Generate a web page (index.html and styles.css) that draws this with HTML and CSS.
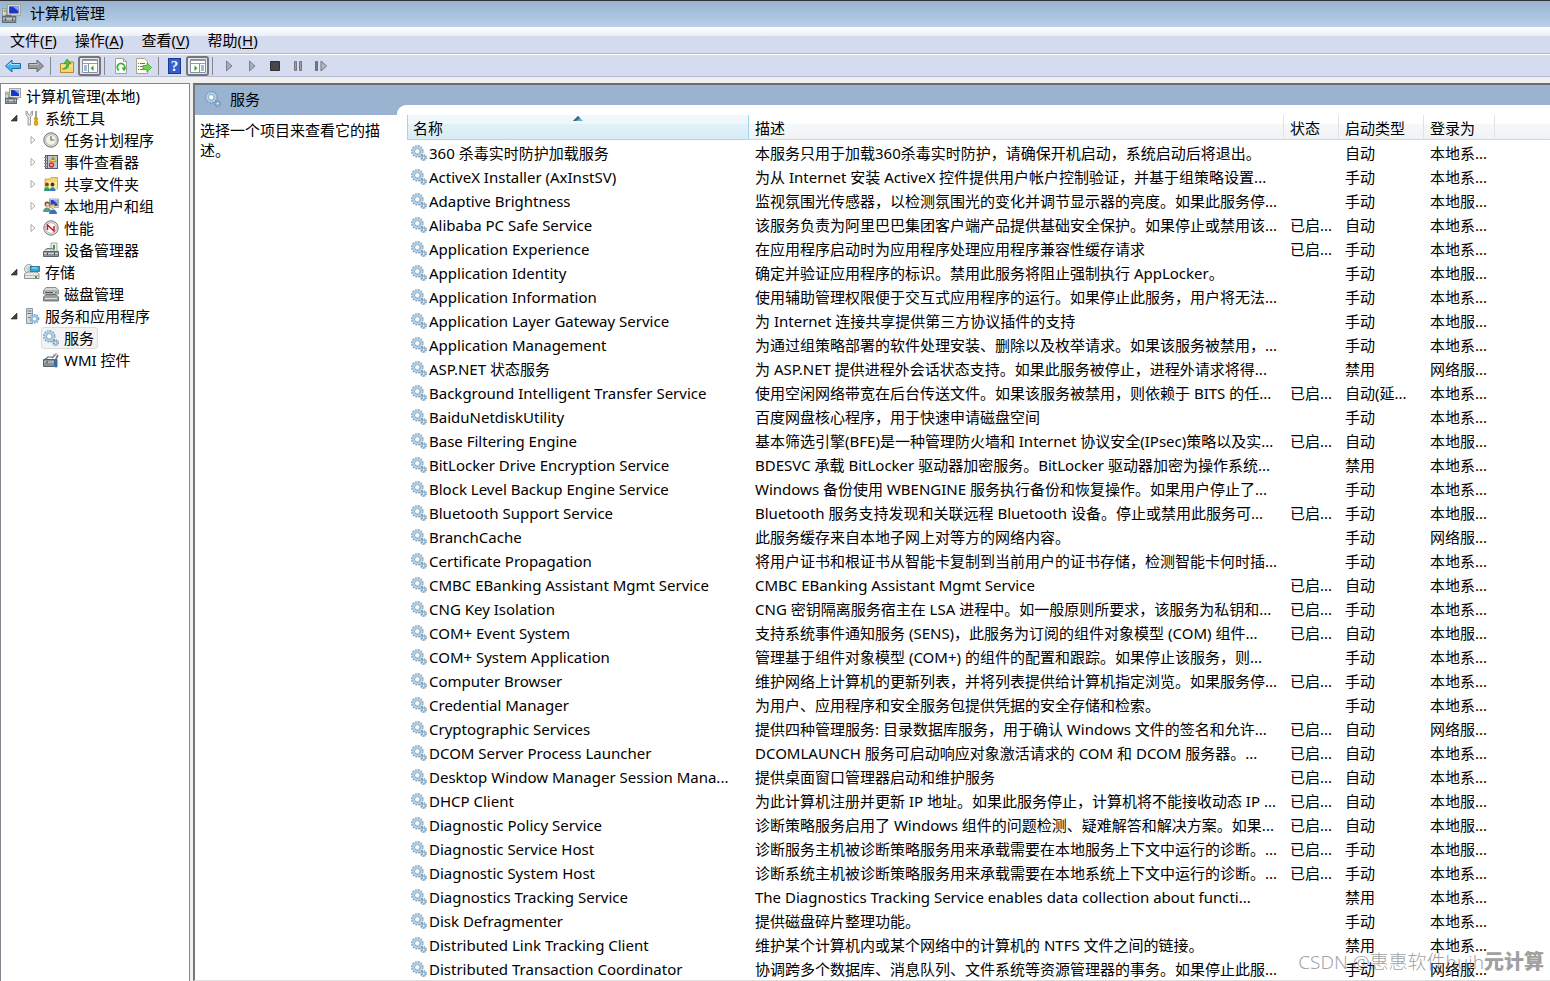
FILE: index.html
```html
<!DOCTYPE html>
<html lang="zh-CN">
<head>
  <meta charset="UTF-8" />
  <title>计算机管理</title>
  <link rel="stylesheet" href="styles.css">
</head>
<body>

  <!-- shared icons -->
  <svg class="sprite" aria-hidden="true">
    <symbol id="i-gears" viewBox="0 0 16 16">
      <circle cx="6.3" cy="6.3" r="5.2" fill="none" stroke="#7391ad" stroke-width="2" stroke-dasharray="1.7 1" />
      <circle cx="6.3" cy="6.3" r="4" fill="none" stroke="#a9cfe9" stroke-width="2.6" />
      <circle cx="6.3" cy="6.3" r="2.7" fill="#fff" stroke="#6d8ba6" stroke-width=".7" />
      <circle cx="12.6" cy="12.6" r="2.6" fill="none" stroke="#6f8ca5" stroke-width="1.6" stroke-dasharray="1.2 .8" />
      <circle cx="12.6" cy="12.6" r="1.5" fill="#fff" stroke="#8fb0ca" stroke-width="1.3" />
    </symbol>
    <symbol id="i-computer" viewBox="0 0 16 16">
      <rect x="4.5" y=".5" width="11" height="9" fill="#e4e4dc" stroke="#a5a59c" />
      <rect x="6" y="2" width="8" height="6" fill="#1d35c4" />
      <path d="M9 2h5v4z" fill="#86a9f2" />
      <path d="M9 10h4l1 2H8z" fill="#b9b9b0" />
      <rect x=".5" y="4" width="3" height="6" fill="#d9dbd6" stroke="#8b8e8a" stroke-width=".7" />
      <path d="M1.5 6h1.5" stroke="#3a9b35" />
      <path d="M3.5 10.5V9.5h4v1" fill="none" stroke="#6b7378" />
      <rect x=".5" y="10.5" width="11" height="5" fill="#8d989e" stroke="#626b70" />
      <path d="M1 12.5h10" stroke="#d5dcdf" /><path d="M3 12v2M9 12v2" stroke="#454c50" />
    </symbol>
    <symbol id="i-tools" viewBox="0 0 16 16">
      <path d="M2 1v4l2 2v8h2.500V7l2-2V1L7 2v2L5.300 5 3.700 4V2z" fill="#e7e7e7" stroke="#888" stroke-width=".8" />
      <path d="M12 1v7" stroke="#8a8a8a" stroke-width="1.600" />
      <path d="M10.300 8h3.400l-.7 2 .8 4.500-1.800 1-1.800-1L11 10z" fill="#f4b000" stroke="#b87900" stroke-width=".7" />
    </symbol>
    <symbol id="i-clock" viewBox="0 0 16 16">
      <circle cx="8" cy="8" r="7.2" fill="#dedede" stroke="#6f6f6f" />
      <circle cx="8" cy="8" r="5.400" fill="#f7f3df" stroke="#a7a7a7" stroke-width=".7" />
      <path d="M8 4v4h3.500" fill="none" stroke="#3c70a8" stroke-width="1.200" />
    </symbol>
    <symbol id="i-event" viewBox="0 0 16 16">
      <rect x="2.500" y="1.500" width="12" height="13" fill="#b8c6da" stroke="#4e5c78" />
      <path d="M4.500 2v12" stroke="#53617b" /><path d="M1 3.500h3M1 6.500h3M1 9.500h3M1 12.500h3" stroke="#888" />
      <path d="M10 2.500l3.500 5h-7z" fill="#ffd42e" stroke="#b28700" stroke-width=".7" />
      <path d="M10 4v2" stroke="#333" />
      <circle cx="8.500" cy="11" r="2.700" fill="#d92e28" /><path d="M7.500 10l2 2m0-2l-2 2" stroke="#fff" stroke-width=".8" />
    </symbol>
    <symbol id="i-share" viewBox="0 0 16 16">
      <path d="M2 3h5l1-1.500h6.500V13H2z" fill="#f6d66d" stroke="#c79a2c" stroke-width=".8" />
      <path d="M3 5.500h11V13H3z" fill="#ffe896" />
      <circle cx="4" cy="8.500" r="1.900" fill="#7b4a26" /><path d="M1 15c0-5 6-5 6 0z" fill="#2f9b6a" />
      <circle cx="9.500" cy="8.500" r="1.900" fill="#3a3a3a" /><path d="M6.700 15c0-5 5.800-5 5.800 0z" fill="#3579c0" />
    </symbol>
    <symbol id="i-users" viewBox="0 0 16 16">
      <rect x="6.500" y="1" width="9" height="8.500" fill="#e4e4dc" stroke="#9c9c94" stroke-width=".8" />
      <rect x="7.500" y="2" width="7" height="6" fill="#2543cc" /><path d="M10 2h4.500v4z" fill="#8fb0f4" />
      <circle cx="4.200" cy="6" r="2.600" fill="#6f4a2c" /><circle cx="4.500" cy="6.800" r="1.700" fill="#efc39a" />
      <path d="M0 14c0-6 8-6 8 0z" fill="#5b9a86" />
      <circle cx="9.800" cy="8.500" r="2.400" fill="#c9a04a" /><circle cx="9.800" cy="9" r="1.700" fill="#f3cda4" />
      <path d="M6 16c0-6 8-6 8 0z" fill="#3673bd" />
    </symbol>
    <symbol id="i-perf" viewBox="0 0 16 16">
      <circle cx="8" cy="8" r="7.200" fill="#e5e5e5" stroke="#767676" />
      <circle cx="8" cy="8" r="5.300" fill="#fff" stroke="#999" stroke-width=".7" />
      <path d="M4.500 10V5l6.500 6V6" fill="none" stroke="#cf1f1f" stroke-width="1.500" />
    </symbol>
    <symbol id="i-device" viewBox="0 0 16 16">
      <path d="M8 1h6v9H8z" fill="#edf0f0" stroke="#8a9292" stroke-width=".8" /><path d="M11 3v4" stroke="#36a536" stroke-width="2" />
      <path d="M1.500 8.500L4 6.500h5l3 2" fill="#c3cacd" stroke="#747c80" />
      <path d="M.5 9.500h15v5H.5z" fill="#8c979d" stroke="#5e676c" />
      <path d="M1 11.500h14" stroke="#d0d8dc" /><path d="M4.500 10.500v2.500M11.500 10.500v2.500" stroke="#444c50" />
    </symbol>
    <symbol id="i-storage" viewBox="0 0 16 16">
      <circle cx="5" cy="5" r="4.500" fill="#dbe4e0" stroke="#8a9790" stroke-width=".8" /><circle cx="5" cy="5" r="1.300" fill="#fff" stroke="#819087" stroke-width=".6" />
      <rect x="6.500" y="2.500" width="9" height="5" fill="#35a7dc" stroke="#1a6d9c" stroke-width=".8" /><path d="M8 4h5" stroke="#b7e8fb" />
      <path d="M2 9l1-1h10l2 2v4.500H.5V10z" fill="#e9e9e4" stroke="#777" stroke-width=".8" />
      <path d="M1 11.500h14" stroke="#aaa" stroke-width=".7" /><rect x="11" y="12" width="2" height="2" fill="#2ba82b" />
    </symbol>
    <symbol id="i-disk" viewBox="0 0 16 16">
      <path d="M3 1.500h10l2.500 3V8H.5V4.500z" fill="#d5d7d7" stroke="#777" stroke-width=".8" />
      <path d="M.5 5h15" stroke="#888" /><path d="M2 6.500h8" stroke="#555" /><path d="M12 6.500h2" stroke="#2ba82b" />
      <path d="M3 8.500h10l2.500 2.500v4H.5v-4z" fill="#9b9e9e" stroke="#5f6262" stroke-width=".8" />
      <path d="M2 12.500h12" stroke="#e1e3e3" />
    </symbol>
    <symbol id="i-apps" viewBox="0 0 16 16">
      <path d="M2.500.5h6v15h-6z" fill="#d4d9dc" stroke="#858d91" stroke-width=".9" />
      <path d="M3.500 3h4M3.500 5.500h4" stroke="#6c757a" /><path d="M4 9.500h2" stroke="#3ca93c" />
      <circle cx="10.500" cy="10.800" r="4.100" fill="none" stroke="#6f9cc0" stroke-width="1.500" stroke-dasharray="1.600 1" />
      <circle cx="10.500" cy="10.800" r="2.600" fill="#fff" stroke="#94bedd" stroke-width="1.900" />
    </symbol>
    <symbol id="i-wmi" viewBox="0 0 16 16">
      <path d="M2 7.500l3-2.500h4" fill="none" stroke="#596267" stroke-width="1.200" />
      <path d="M.5 7.500h11v7H.5z" fill="#87939a" stroke="#566066" /><path d="M1 10h10" stroke="#c9d2d6" /><path d="M4 9v2.500" stroke="#3c4448" />
      <path d="M13 8v6" stroke="#2f6fb3" stroke-width="3" stroke-linecap="round" />
      <path d="M9 6l4-4M13 7l2-4" stroke="#777" stroke-width="1.700" /><path d="M10 3l4-1.500" stroke="#bbb" stroke-width="1.500" />
    </symbol>
    <symbol id="i-open" viewBox="0 0 8 8"><path d="M7 1v6H1z" fill="#404040" stroke="#262626" stroke-width=".6" /></symbol>
    <symbol id="i-closed" viewBox="0 0 8 8"><path d="M2 .5v7L6 4z" fill="#fff" stroke="#a0a0a0" stroke-width=".9" /></symbol>
    <symbol id="i-play" viewBox="0 0 16 16"><path d="M5.500 3v10L11 8z" fill="#a9adb6" stroke="#7d8189" /></symbol>
  </svg>

  <header class="titlebar">
    <svg class="app-icon"><use href="#i-computer" /></svg>
    <h1>计算机管理</h1>
  </header>

  <nav class="menubar">
    <button>文件(<u>F</u>)</button>
    <button>操作(<u>A</u>)</button>
    <button>查看(<u>V</u>)</button>
    <button>帮助(<u>H</u>)</button>
  </nav>

  <div class="toolbar">
    <button aria-label="后退"><svg viewBox="0 0 16 16"><path d="M.5 8l6.500-6v3.500h8.500v5H7V14z" fill="#43b4ee" stroke="#1a6aa5" /><path d="M2.500 7.500L6 4.500v2h8.500" fill="none" stroke="#a9e2fc" /></svg></button>
    <button aria-label="前进"><svg viewBox="0 0 16 16"><path d="M15.500 8L9 2v3.500H.5v5H9V14z" fill="#96989c" stroke="#68696c" /><path d="M1.500 6.500H10v-2" fill="none" stroke="#c5c6c9" /></svg></button>
    <span class="sep"></span>
    <button aria-label="上一级"><svg viewBox="0 0 16 16"><path d="M1.500 5.500H6L7.500 4h7v10.500h-13z" fill="#f4d474" stroke="#b78a2b" /><path d="M2 8h12" stroke="#fff0b4" /><path d="M3.500 11c3.500-1 4-3 4-5.500H5L8 1l4 4.500h-2c0 4-2 6-6.500 5.500z" fill="#4fc13c" stroke="#2b8a20" stroke-width=".6" /></svg></button>
    <button class="pressed" aria-label="显示/隐藏控制台树"><svg viewBox="0 0 16 16"><path d="M.5 1.500h15v13H.5z" fill="#fff" stroke="#8a8f99" /><path d="M1 2.500h14M1 5.500h14" stroke="#959ba6" /><path d="M6.500 6v8.500" stroke="#8a8f99" /><path d="M2 8h3M2 10h3M2 12h3" stroke="#3978b8" /><path d="M11.500 7.500v5.500l-3-2.800z" fill="#2fa52c" /></svg></button>
    <span class="sep"></span>
    <button aria-label="刷新"><svg viewBox="0 0 16 16"><path d="M2.500.5h8l3 3v12h-11z" fill="#fff" stroke="#a0a0a0" /><path d="M10.500.5v3h3" fill="none" stroke="#a0a0a0" /><path d="M6 12.300A3.700 3.700 0 1 1 11.200 11" fill="none" stroke="#36b336" stroke-width="1.800" /><path d="M8.500 9.500h5L11 13.500z" fill="#36b336" /></svg></button>
    <button aria-label="导出列表"><svg viewBox="0 0 16 16"><path d="M.5.500h8l3 3v12H.5z" fill="#fffbe9" stroke="#aaa38e" /><path d="M2 5.500h1M4 5.500h5M2 8.500h1M4 8.500h4M2 11.500h1M4 11.500h4" stroke="#6e6e8a" /><path d="M7 7.500h4V5l4.500 4.500L11 14v-2.500H7z" fill="#6fd156" stroke="#329b28" stroke-width=".7" /></svg></button>
    <span class="sep"></span>
    <button aria-label="帮助"><span class="help">?</span></button>
    <button class="pressed" aria-label="显示/隐藏操作窗格"><svg viewBox="0 0 16 16"><path d="M.5 1.500h15v13H.5z" fill="#fff" stroke="#8a8f99" /><path d="M1 2.500h14M1 5.500h14" stroke="#959ba6" /><path d="M9.500 6v8.500" stroke="#8a8f99" /><path d="M11 8h3M11 10h3M11 12h3" stroke="#3978b8" /><path d="M4.500 7.500v5.500l3-2.800z" fill="#2fa52c" /></svg></button>
    <span class="sep"></span>
    <button aria-label="启动服务"><svg><use href="#i-play" /></svg></button>
    <button aria-label="继续"><svg><use href="#i-play" /></svg></button>
    <button aria-label="停止服务"><svg viewBox="0 0 16 16"><path d="M3.500 3.500h9v9h-9z" fill="#474747" stroke="#2f2f2f" /></svg></button>
    <button aria-label="暂停服务"><svg viewBox="0 0 16 16"><path d="M4.500 3.500h2v9h-2zM9.500 3.500h2v9h-2z" fill="#9a9ea7" stroke="#74777e" /></svg></button>
    <button aria-label="重启动服务"><svg viewBox="0 0 16 16"><path d="M2.500 3.500h2v9h-2z" fill="#777b84" stroke="#6b6e75" /><path d="M8 3v10l5.500-5z" fill="#b3b6be" stroke="#6f737b" /></svg></button>
  </div>

  <main class="workspace">
    <nav class="tree">
      <a href="#"><svg class="icon"><use href="#i-computer" /></svg><span>计算机管理(本地)</span></a>
      <ul>
        <li>
          <a href="#"><svg class="arrow"><use href="#i-open" /></svg><svg class="icon"><use href="#i-tools" /></svg><span>系统工具</span></a>
          <ul>
            <li><a href="#"><svg class="arrow"><use href="#i-closed" /></svg><svg class="icon"><use href="#i-clock" /></svg><span>任务计划程序</span></a></li>
            <li><a href="#"><svg class="arrow"><use href="#i-closed" /></svg><svg class="icon"><use href="#i-event" /></svg><span>事件查看器</span></a></li>
            <li><a href="#"><svg class="arrow"><use href="#i-closed" /></svg><svg class="icon"><use href="#i-share" /></svg><span>共享文件夹</span></a></li>
            <li><a href="#"><svg class="arrow"><use href="#i-closed" /></svg><svg class="icon"><use href="#i-users" /></svg><span>本地用户和组</span></a></li>
            <li><a href="#"><svg class="arrow"><use href="#i-closed" /></svg><svg class="icon"><use href="#i-perf" /></svg><span>性能</span></a></li>
            <li><a href="#"><svg class="arrow"></svg><svg class="icon"><use href="#i-device" /></svg><span>设备管理器</span></a></li>
          </ul>
        </li>
        <li>
          <a href="#"><svg class="arrow"><use href="#i-open" /></svg><svg class="icon"><use href="#i-storage" /></svg><span>存储</span></a>
          <ul>
            <li><a href="#"><svg class="arrow"></svg><svg class="icon"><use href="#i-disk" /></svg><span>磁盘管理</span></a></li>
          </ul>
        </li>
        <li>
          <a href="#"><svg class="arrow"><use href="#i-open" /></svg><svg class="icon"><use href="#i-apps" /></svg><span>服务和应用程序</span></a>
          <ul>
            <li><a href="#"><svg class="arrow"></svg><span class="selected"><svg class="icon"><use href="#i-gears" /></svg><span>服务</span></span></a></li>
            <li><a href="#"><svg class="arrow"></svg><svg class="icon"><use href="#i-wmi" /></svg><span>WMI 控件</span></a></li>
          </ul>
        </li>
      </ul>
    </nav>

    <section class="pane">
      <div class="info">
        <h2><svg class="icon"><use href="#i-gears" /></svg>服务</h2>
        <p>选择一个项目来查看它的描述。</p>
      </div>

      <div class="list">
        <table>
          <colgroup>
            <col class="c-name"><col class="c-desc"><col class="c-status"><col class="c-type"><col class="c-logon"><col>
          </colgroup>
          <thead>
            <tr><th class="sorted">名称<svg class="sort" viewBox="0 0 10 5"><path d="M0 5l5-5 5 5z" fill="#6fa9c6" /><path d="M0 5l5-5 2 2-4 3z" fill="#376a88" /></svg></th><th>描述</th><th>状态</th><th>启动类型</th><th>登录为</th><th></th></tr>
          </thead>
          <tbody>
            <tr><td><svg class="icon"><use href="#i-gears" /></svg>360 杀毒实时防护加载服务</td><td>本服务只用于加载360杀毒实时防护，请确保开机启动，系统启动后将退出。</td><td></td><td>自动</td><td>本地系...</td></tr>
            <tr><td><svg class="icon"><use href="#i-gears" /></svg>ActiveX Installer (AxInstSV)</td><td>为从 Internet 安装 ActiveX 控件提供用户帐户控制验证，并基于组策略设置...</td><td></td><td>手动</td><td>本地系...</td></tr>
            <tr><td><svg class="icon"><use href="#i-gears" /></svg>Adaptive Brightness</td><td>监视氛围光传感器，以检测氛围光的变化并调节显示器的亮度。如果此服务停...</td><td></td><td>手动</td><td>本地服...</td></tr>
            <tr><td><svg class="icon"><use href="#i-gears" /></svg>Alibaba PC Safe Service</td><td>该服务负责为阿里巴巴集团客户端产品提供基础安全保护。如果停止或禁用该...</td><td>已启...</td><td>自动</td><td>本地系...</td></tr>
            <tr><td><svg class="icon"><use href="#i-gears" /></svg>Application Experience</td><td>在应用程序启动时为应用程序处理应用程序兼容性缓存请求</td><td>已启...</td><td>手动</td><td>本地系...</td></tr>
            <tr><td><svg class="icon"><use href="#i-gears" /></svg>Application Identity</td><td>确定并验证应用程序的标识。禁用此服务将阻止强制执行 AppLocker。</td><td></td><td>手动</td><td>本地服...</td></tr>
            <tr><td><svg class="icon"><use href="#i-gears" /></svg>Application Information</td><td>使用辅助管理权限便于交互式应用程序的运行。如果停止此服务，用户将无法...</td><td></td><td>手动</td><td>本地系...</td></tr>
            <tr><td><svg class="icon"><use href="#i-gears" /></svg>Application Layer Gateway Service</td><td>为 Internet 连接共享提供第三方协议插件的支持</td><td></td><td>手动</td><td>本地服...</td></tr>
            <tr><td><svg class="icon"><use href="#i-gears" /></svg>Application Management</td><td>为通过组策略部署的软件处理安装、删除以及枚举请求。如果该服务被禁用，...</td><td></td><td>手动</td><td>本地系...</td></tr>
            <tr><td><svg class="icon"><use href="#i-gears" /></svg>ASP.NET 状态服务</td><td>为 ASP.NET 提供进程外会话状态支持。如果此服务被停止，进程外请求将得...</td><td></td><td>禁用</td><td>网络服...</td></tr>
            <tr><td><svg class="icon"><use href="#i-gears" /></svg>Background Intelligent Transfer Service</td><td>使用空闲网络带宽在后台传送文件。如果该服务被禁用，则依赖于 BITS 的任...</td><td>已启...</td><td>自动(延...</td><td>本地系...</td></tr>
            <tr><td><svg class="icon"><use href="#i-gears" /></svg>BaiduNetdiskUtility</td><td>百度网盘核心程序，用于快速申请磁盘空间</td><td></td><td>手动</td><td>本地系...</td></tr>
            <tr><td><svg class="icon"><use href="#i-gears" /></svg>Base Filtering Engine</td><td>基本筛选引擎(BFE)是一种管理防火墙和 Internet 协议安全(IPsec)策略以及实...</td><td>已启...</td><td>自动</td><td>本地服...</td></tr>
            <tr><td><svg class="icon"><use href="#i-gears" /></svg>BitLocker Drive Encryption Service</td><td>BDESVC 承载 BitLocker 驱动器加密服务。BitLocker 驱动器加密为操作系统...</td><td></td><td>禁用</td><td>本地系...</td></tr>
            <tr><td><svg class="icon"><use href="#i-gears" /></svg>Block Level Backup Engine Service</td><td>Windows 备份使用 WBENGINE 服务执行备份和恢复操作。如果用户停止了...</td><td></td><td>手动</td><td>本地系...</td></tr>
            <tr><td><svg class="icon"><use href="#i-gears" /></svg>Bluetooth Support Service</td><td>Bluetooth 服务支持发现和关联远程 Bluetooth 设备。停止或禁用此服务可...</td><td>已启...</td><td>手动</td><td>本地服...</td></tr>
            <tr><td><svg class="icon"><use href="#i-gears" /></svg>BranchCache</td><td>此服务缓存来自本地子网上对等方的网络内容。</td><td></td><td>手动</td><td>网络服...</td></tr>
            <tr><td><svg class="icon"><use href="#i-gears" /></svg>Certificate Propagation</td><td>将用户证书和根证书从智能卡复制到当前用户的证书存储，检测智能卡何时插...</td><td></td><td>手动</td><td>本地系...</td></tr>
            <tr><td><svg class="icon"><use href="#i-gears" /></svg>CMBC EBanking Assistant Mgmt Service</td><td>CMBC EBanking Assistant Mgmt Service</td><td>已启...</td><td>自动</td><td>本地系...</td></tr>
            <tr><td><svg class="icon"><use href="#i-gears" /></svg>CNG Key Isolation</td><td>CNG 密钥隔离服务宿主在 LSA 进程中。如一般原则所要求，该服务为私钥和...</td><td>已启...</td><td>手动</td><td>本地系...</td></tr>
            <tr><td><svg class="icon"><use href="#i-gears" /></svg>COM+ Event System</td><td>支持系统事件通知服务 (SENS)，此服务为订阅的组件对象模型 (COM) 组件...</td><td>已启...</td><td>自动</td><td>本地服...</td></tr>
            <tr><td><svg class="icon"><use href="#i-gears" /></svg>COM+ System Application</td><td>管理基于组件对象模型 (COM+) 的组件的配置和跟踪。如果停止该服务，则...</td><td></td><td>手动</td><td>本地系...</td></tr>
            <tr><td><svg class="icon"><use href="#i-gears" /></svg>Computer Browser</td><td>维护网络上计算机的更新列表，并将列表提供给计算机指定浏览。如果服务停...</td><td>已启...</td><td>手动</td><td>本地系...</td></tr>
            <tr><td><svg class="icon"><use href="#i-gears" /></svg>Credential Manager</td><td>为用户、应用程序和安全服务包提供凭据的安全存储和检索。</td><td></td><td>手动</td><td>本地系...</td></tr>
            <tr><td><svg class="icon"><use href="#i-gears" /></svg>Cryptographic Services</td><td>提供四种管理服务: 目录数据库服务，用于确认 Windows 文件的签名和允许...</td><td>已启...</td><td>自动</td><td>网络服...</td></tr>
            <tr><td><svg class="icon"><use href="#i-gears" /></svg>DCOM Server Process Launcher</td><td>DCOMLAUNCH 服务可启动响应对象激活请求的 COM 和 DCOM 服务器。...</td><td>已启...</td><td>自动</td><td>本地系...</td></tr>
            <tr><td><svg class="icon"><use href="#i-gears" /></svg>Desktop Window Manager Session Mana...</td><td>提供桌面窗口管理器启动和维护服务</td><td>已启...</td><td>自动</td><td>本地系...</td></tr>
            <tr><td><svg class="icon"><use href="#i-gears" /></svg>DHCP Client</td><td>为此计算机注册并更新 IP 地址。如果此服务停止，计算机将不能接收动态 IP ...</td><td>已启...</td><td>自动</td><td>本地服...</td></tr>
            <tr><td><svg class="icon"><use href="#i-gears" /></svg>Diagnostic Policy Service</td><td>诊断策略服务启用了 Windows 组件的问题检测、疑难解答和解决方案。如果...</td><td>已启...</td><td>自动</td><td>本地服...</td></tr>
            <tr><td><svg class="icon"><use href="#i-gears" /></svg>Diagnostic Service Host</td><td>诊断服务主机被诊断策略服务用来承载需要在本地服务上下文中运行的诊断。...</td><td>已启...</td><td>手动</td><td>本地服...</td></tr>
            <tr><td><svg class="icon"><use href="#i-gears" /></svg>Diagnostic System Host</td><td>诊断系统主机被诊断策略服务用来承载需要在本地系统上下文中运行的诊断。...</td><td>已启...</td><td>手动</td><td>本地系...</td></tr>
            <tr><td><svg class="icon"><use href="#i-gears" /></svg>Diagnostics Tracking Service</td><td>The Diagnostics Tracking Service enables data collection about functi...</td><td></td><td>禁用</td><td>本地系...</td></tr>
            <tr><td><svg class="icon"><use href="#i-gears" /></svg>Disk Defragmenter</td><td>提供磁盘碎片整理功能。</td><td></td><td>手动</td><td>本地系...</td></tr>
            <tr><td><svg class="icon"><use href="#i-gears" /></svg>Distributed Link Tracking Client</td><td>维护某个计算机内或某个网络中的计算机的 NTFS 文件之间的链接。</td><td></td><td>禁用</td><td>本地系...</td></tr>
            <tr><td><svg class="icon"><use href="#i-gears" /></svg>Distributed Transaction Coordinator</td><td>协调跨多个数据库、消息队列、文件系统等资源管理器的事务。如果停止此服...</td><td></td><td>手动</td><td>网络服...</td></tr>
          </tbody>
        </table>
      </div>
    </section>
  </main>

  <div class="watermark"><span>CSDN @惠惠软件huih</span><b>元计算</b></div>

</body>
</html>
```
FILE: styles.css
```css
* {
  box-sizing: border-box;
}

body {
  margin: 0;
  height: 100vh;
  display: flex;
  flex-direction: column;
  overflow: hidden;
  position: relative;
  background: #f0f0f0;
  color: #000;
  font-family: "Noto Sans", "Noto Sans CJK SC", sans-serif;
  font-size: 15px;
  line-height: 20px;
}

h1, h2, p, ul {
  margin: 0;
  padding: 0;
  font-size: 15px;
  font-weight: normal;
}

button {
  border: none;
  background: none;
  padding: 0;
  font: inherit;
  color: inherit;
}

a {
  color: inherit;
  text-decoration: none;
}

svg {
  display: block;
  flex: none;
}

.sprite {
  position: absolute;
  width: 0;
  height: 0;
}

.icon {
  width: 16px;
  height: 16px;
}

/* title, menu, toolbar */
.titlebar {
  display: flex;
  align-items: center;
  gap: 9px;
  height: 27px;
  flex: none;
  padding: 0 0 2px 2px;
  border-top: 1px solid #2f3237;
  background: linear-gradient(#98b2d0, #b8d0e9);
}

.app-icon {
  width: 19px;
  height: 19px;
}

.menubar {
  display: flex;
  gap: 2px;
  height: 27px;
  flex: none;
  padding-left: 2px;
  border-bottom: 1px solid #b5b9c8;
  background: linear-gradient(#fff, #eceff8 34%, #d4daed 36%, #d6dcef);
}

.menubar button {
  padding: 0 8px;
}

.menubar u {
  text-underline-offset: 2px;
}

.toolbar {
  display: flex;
  align-items: center;
  height: 23px;
  flex: none;
  padding-left: 1px;
  border-top: 1px solid #fff;
  border-bottom: 1px solid #b6bad0;
  background: #d6dcef;
}

.toolbar button {
  display: flex;
  align-items: center;
  justify-content: center;
  width: 23px;
  height: 20px;
}

.toolbar svg {
  width: 16px;
  height: 16px;
}

.toolbar .pressed {
  border: 2px solid #73767f;
  border-radius: 3px;
  background: #e3e6ef;
}

.sep {
  width: 1px;
  height: 18px;
  margin: 0 4px 0 3px;
  background: #85888f;
}

.help {
  width: 13px;
  height: 16px;
  border: 1px solid #183a91;
  background: #3360cb;
  color: #fff;
  font-family: "Liberation Serif", serif;
  font-weight: bold;
  font-size: 15px;
  line-height: 14px;
}

/* panes */
.workspace {
  display: flex;
  flex: 1;
  min-height: 0;
  gap: 3px;
  padding-top: 6px;
}

.tree {
  width: 190px;
  flex: none;
  padding: 1px 0 0 4px;
  border: 1px solid #828790;
  border-bottom: none;
  background: #fff;
  white-space: nowrap;
}

.tree ul {
  list-style: none;
}

.tree a {
  display: flex;
  align-items: center;
  gap: 5px;
  height: 22px;
}

.tree ul ul {
  padding-left: 19px;
}

.tree .arrow {
  width: 8px;
  height: 8px;
  margin: 0 1px 0 5px;
}

.selected {
  display: flex;
  align-items: center;
  gap: 5px;
  height: 22px;
  margin-left: -2px;
  padding: 0 3px 0 1px;
  border: 1px solid #dcdcdc;
  border-radius: 3px;
  background: #f3f3f3;
}

.pane {
  display: flex;
  flex: 1;
  min-width: 0;
  border-top: 2px solid #6c6c6c;
  border-left: 2px solid #777;
  border-bottom: 1px solid #e0e0e0;
  background: #99b3d0;
}

.info {
  display: flex;
  flex-direction: column;
  width: 202px;
  flex: none;
}

.info h2 {
  display: flex;
  align-items: center;
  gap: 9px;
  height: 30px;
  padding: 0 0 2px 10px;
}

.info p {
  flex: 1;
  padding: 5px 5px 0;
  background: #fff;
}

.list {
  flex: 1;
  min-width: 0;
  margin-top: 20px;
  padding: 10px 0 0 10px;
  border-top-left-radius: 9px;
  background: #fff;
  overflow: hidden;
}

table {
  width: 100%;
  table-layout: fixed;
  border-collapse: separate;
  border-spacing: 0;
}

.c-name { width: 342px; }
.c-desc { width: 535px; }
.c-status { width: 55px; }
.c-type { width: 85px; }
.c-logon { width: 71px; }

th {
  height: 25px;
  padding: 2px 0 0 6px;
  border-right: 1px solid #e2e3e5;
  border-bottom: 1px solid #d5d5d5;
  background: linear-gradient(#fff 36%, #f7f8fa 38%, #f1f2f4);
  font-weight: normal;
  text-align: left;
}

th:last-child {
  border-right: none;
}

.sorted {
  position: relative;
  border: 1px solid #96d9f9;
  border-top: none;
  padding-left: 5px;
  background: linear-gradient(#f2f9fc, #eef7fb 36%, #e1f1f8 38%, #d8ecf6);
}

.sort {
  position: absolute;
  top: 1px;
  left: 165px;
  width: 10px;
  height: 5px;
}

td {
  height: 24px;
  padding: 2px 0 0 6px;
  white-space: nowrap;
}

td:first-child {
  padding-left: 4px;
}

td .icon {
  display: inline-block;
  margin-right: 2px;
  vertical-align: -2px;
}

.watermark {
  position: absolute;
  right: 6px;
  bottom: 4px;
  display: flex;
  font-size: 20px;
  line-height: 30px;
  color: rgba(120, 120, 120, 0.7);
  white-space: nowrap;
}

.watermark span {
  font-size: 19px;
  font-weight: 300;
}

.watermark b {
  color: #a0a0a0;
  font-weight: 900;
}
```
